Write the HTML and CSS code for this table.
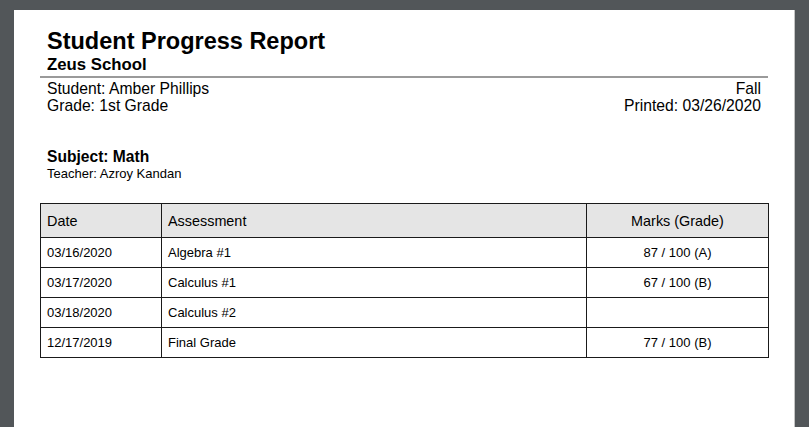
FILE: index.html
```html
<!DOCTYPE html>
<html lang="en">
<head>
<meta charset="utf-8">
<title>Student Progress Report</title>
<link rel="stylesheet" href="styles.css">
</head>
<body>
<div class="page">
  <header class="report-head">
    <h1 class="title">Student Progress Report</h1>
    <div class="school">Zeus School</div>
  </header>
  <div class="info">
    <div class="info-left">
      <div>Student: Amber Phillips</div>
      <div>Grade: 1st Grade</div>
    </div>
    <div class="info-right">
      <div>Fall</div>
      <div>Printed: 03/26/2020</div>
    </div>
  </div>
  <section class="subject">
    <h2 class="subject-name">Subject: Math</h2>
    <div class="teacher">Teacher: Azroy Kandan</div>
  </section>
  <table class="grades">
    <colgroup>
      <col class="c-date">
      <col class="c-assess">
      <col class="c-marks">
    </colgroup>
    <thead>
      <tr>
        <th>Date</th>
        <th>Assessment</th>
        <th class="center">Marks (Grade)</th>
      </tr>
    </thead>
    <tbody>
      <tr><td>03/16/2020</td><td>Algebra #1</td><td class="center">87 / 100 (A)</td></tr>
      <tr><td>03/17/2020</td><td>Calculus #1</td><td class="center">67 / 100 (B)</td></tr>
      <tr><td>03/18/2020</td><td>Calculus #2</td><td class="center"></td></tr>
      <tr><td>12/17/2019</td><td>Final Grade</td><td class="center">77 / 100 (B)</td></tr>
    </tbody>
  </table>
</div>
</body>
</html>
```
FILE: styles.css
```css
html, body {
  margin: 0;
  padding: 0;
}
body {
  background: #525659;
  height: 427px;
  overflow: hidden;
  padding: 10px 0 0 14px;
  box-sizing: border-box;
  font-family: "Liberation Sans", Arial, sans-serif;
  color: #000;
}
.page {
  width: 780px;
  height: 417px;
  background: #fff;
  box-sizing: border-box;
  padding: 18px 26px 0 26px;
  box-shadow: 1px 0 0 #c4c4c4;
}
.report-head {
  padding: 0 7px 1px 7px;
  border-bottom: 2px solid #9a9a9a;
}
.title {
  margin: 0;
  font-size: 23.5px;
  line-height: 27px;
  font-weight: bold;
}
.school {
  font-size: 16.8px;
  line-height: 20px;
  font-weight: bold;
}
.info {
  display: flex;
  justify-content: space-between;
  padding: 0 7px;
  margin-top: 2px;
  font-size: 15.7px;
  line-height: 17px;
}
.info-right {
  text-align: right;
}
.subject {
  padding: 0 7px;
  margin-top: 33px;
}
.subject-name {
  margin: 0;
  font-size: 15.6px;
  line-height: 19px;
  font-weight: bold;
}
.teacher {
  font-size: 13px;
  line-height: 15px;
}
.grades {
  margin-top: 22px;
  width: 728px;
  border-collapse: collapse;
  table-layout: fixed;
}
.c-date { width: 121px; }
.c-assess { width: 425px; }
.c-marks { width: 182px; }
.grades th,
.grades td {
  border: 1px solid #1a1a1a;
  padding: 0 6px;
  text-align: left;
  white-space: nowrap;
}
.grades th {
  background: #e5e5e5;
  font-weight: normal;
  font-size: 14.4px;
  height: 33px;
}
.grades td {
  font-size: 13px;
  height: 29px;
}
.grades .center {
  text-align: center;
}
```
